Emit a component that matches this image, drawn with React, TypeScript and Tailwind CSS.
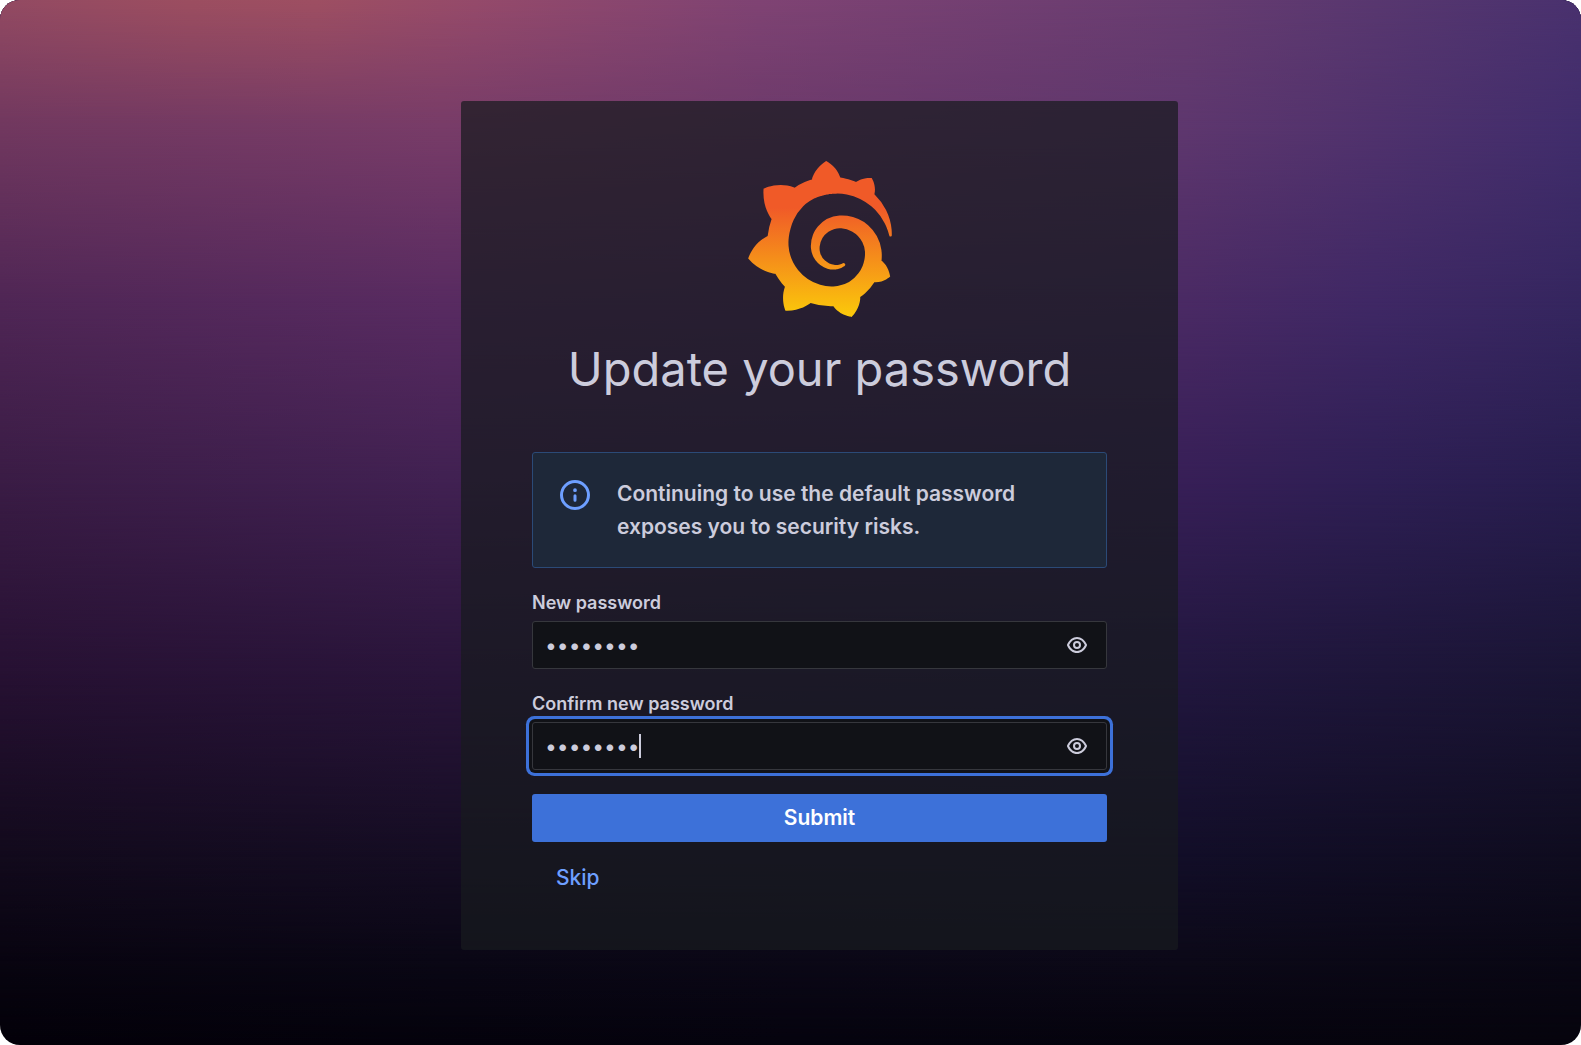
import React from "react";
import { SiGrafana } from "react-icons/si";

interface IPasswordField {
  readonly id: string;
  label: string;
  active?: boolean;
}

const EyeIcon: React.FC = () => (
  <svg viewBox="0 0 24 24" className="w-6 h-6 fill-current" aria-hidden="true">
    <path d="M21.92,11.6C19.9,6.91,16.1,4,12,4S4.1,6.91,2.08,11.6a1,1,0,0,0,0,.8C4.1,17.09,7.9,20,12,20s7.9-2.91,9.92-7.6A1,1,0,0,0,21.92,11.6ZM12,18c-3.17,0-6.17-2.29-7.9-6C5.83,8.29,8.83,6,12,6s6.17,2.29,7.9,6C18.17,15.71,15.17,18,12,18ZM12,8a4,4,0,1,0,4,4A4,4,0,0,0,12,8Zm0,6a2,2,0,1,1,2-2A2,2,0,0,1,12,14Z" />
  </svg>
);

const InfoIcon: React.FC = () => (
  <svg
    viewBox="0 0 24 24"
    className="w-9 h-9 shrink-0 fill-[#6e9fff]"
    aria-hidden="true"
  >
    <path d="M12,2A10,10,0,1,0,22,12,10.01114,10.01114,0,0,0,12,2Zm0,18a8,8,0,1,1,8-8A8.00917,8.00917,0,0,1,12,20Zm0-8.5a1,1,0,0,0-1,1v3a1,1,0,0,0,2,0v-3A1,1,0,0,0,12,11.5Zm0-4a1.25,1.25,0,1,0,1.25,1.25A1.25,1.25,0,0,0,12,7.5Z" />
  </svg>
);

const Logo: React.FC = () => (
  <div className="flex justify-center">
    <svg width="0" height="0" aria-hidden="true">
      <linearGradient id="logo-fill" x1="0" y1="0" x2="0" y2="1">
        <stop offset="0.3" stopColor="#f05a28" />
        <stop offset="1" stopColor="#fbca0a" />
      </linearGradient>
    </svg>
    <SiGrafana className="w-39 h-39" fill="url(#logo-fill)" />
  </div>
);

// each layer is one row of colours that fades out into the row below it
const Backdrop: React.FC = () => (
  <div className="absolute inset-0 -z-10 grid overflow-hidden" aria-hidden="true">
    <div className="[grid-area:1/1] bg-[linear-gradient(to_right,#030109,#05030e_50%,#06040d)]" />
    <div className="[grid-area:1/1] bg-[linear-gradient(to_right,#080410,#0a0715_28%,#0c0918_75%,#090714)] mask-[linear-gradient(#000_92%,transparent_100%)]" />
    <div className="[grid-area:1/1] bg-[linear-gradient(to_right,#120a1c,#150d23_28%,#120e28_75%,#0f0c1f)] mask-[linear-gradient(#000_82%,transparent_92%)]" />
    <div className="[grid-area:1/1] bg-[linear-gradient(to_right,#271133,#2a153b_28%,#22173f_75%,#1a1535)] mask-[linear-gradient(#000_64%,transparent_82%)]" />
    <div className="[grid-area:1/1] bg-[linear-gradient(to_right,#3a1c45,#412152_28%,#371f57_75%,#2e1f54_87%,#271d4e)] mask-[linear-gradient(#000_46%,transparent_64%)]" />
    <div className="[grid-area:1/1] bg-[linear-gradient(to_right,#4f2655,#582b61_28%,#4a2a64_75%,#3f2865_87%,#35265f)] mask-[linear-gradient(#000_29%,transparent_46%)]" />
    <div className="[grid-area:1/1] bg-[linear-gradient(to_right,#71385f,#783c68_28%,#5e376e_75%,#50326d_87%,#412d6c)] mask-[linear-gradient(#000_12%,transparent_29%)]" />
    <div className="[grid-area:1/1] bg-[linear-gradient(to_right,#934a62,#9c4e60_12%,#9e4f62_20%,#954a6a_30%,#7f4373_48%,#673c70_75%,#58376f_87%,#49316e)] mask-[linear-gradient(#000,transparent_12%)]" />
  </div>
);

const PasswordField: React.FC<IPasswordField> = ({ id, label, active }) => {
  const [value, setValue] = React.useState<string>("password");
  const [visible, setVisible] = React.useState<boolean>(false);

  return (
    <div>
      <label htmlFor={id} className="block pb-2 text-lg/[21px] font-semibold">
        {label}
      </label>
      <div
        className={`relative flex items-center h-12 rounded-[3px] border border-[#36373d] bg-[#111217] ${
          active ? "shadow-[0_0_0_3px_#111217,0_0_0_6px_#3d71d9]" : ""
        }`}
      >
        <input
          id={id}
          type={visible ? "text" : "password"}
          value={value}
          onChange={(e) => setValue(e.target.value)}
          className="min-w-0 flex-1 h-full pl-3 text-[21px] bg-transparent outline-none"
        />
        {active && (
          <span className="absolute left-[106px] w-0.5 h-6 bg-[#ccccdc]" />
        )}
        <button
          type="button"
          aria-label="Show password"
          className="px-[17px]"
          onClick={() => setVisible((prevState) => !prevState)}
        >
          <EyeIcon />
        </button>
      </div>
    </div>
  );
};

const App: React.FC = () => {
  return (
    <div className="bg-white">
      <main className="relative isolate flex min-h-screen items-center justify-center overflow-hidden rounded-[20px] pt-1.5 pl-[58px] font-['Inter',sans-serif] text-[#ccccdc]">
        <Backdrop />
        <section className="w-full max-w-[717px] rounded-[3px] bg-[#181b1f]/72 px-[71px] pt-15 pb-12">
          <Logo />
          <h1 className="pt-6 text-center text-[47px]/[55px]">
            Update your password
          </h1>
          <form
            className="flex flex-col gap-6 pt-14"
            onSubmit={(e) => e.preventDefault()}
          >
            <div
              role="alert"
              className="flex gap-6 rounded-[3px] border border-[#2b4a77] bg-[#1e2839] px-6 py-6 text-[21px]/[33px] font-semibold"
            >
              <InfoIcon />
              <p>
                Continuing to use the default password exposes you to security
                risks.
              </p>
            </div>
            <PasswordField id="new-password" label="New password" />
            <PasswordField
              id="confirm-password"
              label="Confirm new password"
              active
            />
            <button
              type="submit"
              className="h-12 rounded-[3px] bg-[#3d71d9] text-[21px] font-semibold text-white"
            >
              Submit
            </button>
            <button
              type="button"
              className="-mt-3 h-12 self-start px-6 text-[21px] font-medium text-[#6e9fff]"
            >
              Skip
            </button>
          </form>
        </section>
      </main>
    </div>
  );
};

export default App;
